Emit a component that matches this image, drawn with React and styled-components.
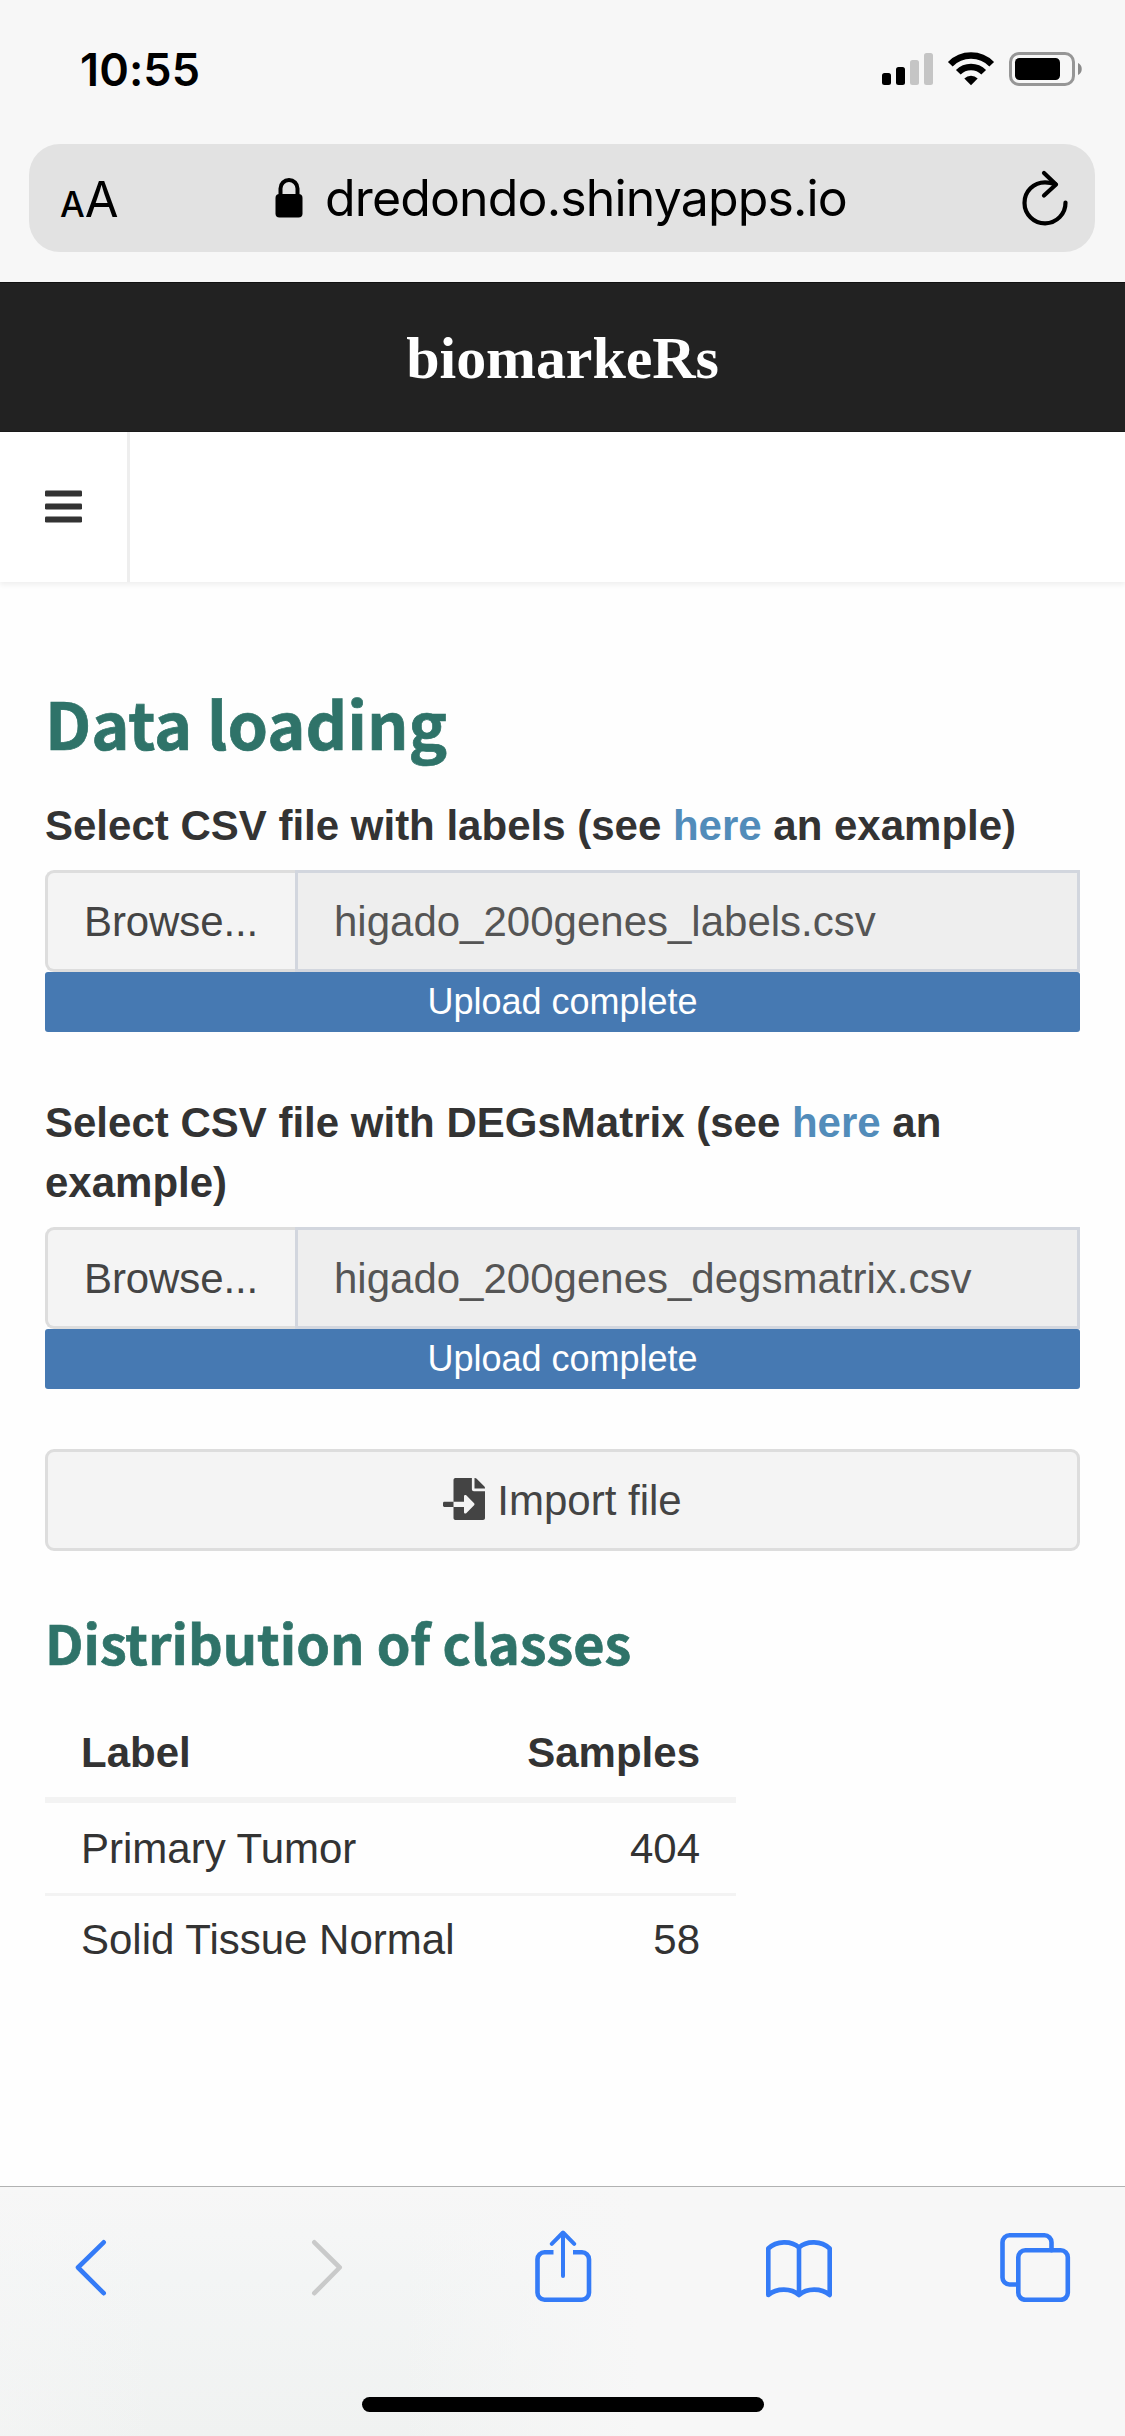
import React from "react";
import styled, { createGlobalStyle } from "styled-components";
import { FaFileImport } from "react-icons/fa";

const GlobalStyle = createGlobalStyle`
  * { box-sizing: border-box; }
  body { margin: 0; background: #fefefe; }
`;

const systemFont = `Inter, Roboto, sans-serif`;
const pageFont = `"Liberation Sans", Arial, sans-serif`;
const headingFont = `"Noto Sans CJK SC", "Noto Sans", sans-serif`;

const Screen = styled.div`
  display: flex;
  flex-direction: column;
  width: 1125px;
  height: 2436px;
  overflow: hidden;
  background: #fefefe;
  font-family: ${pageFont};
  font-size: 42px;
  line-height: 60px;
  color: #333;
`;

const BrowserTop = styled.header`
  height: 282px;
  flex: none;
  background: #f7f7f7;
  color: #000;
  font-family: ${systemFont};
`;

const StatusBar = styled.div`
  height: 144px;
  padding: 49px 43px 0 80px;
  display: flex;
  justify-content: space-between;
  align-items: flex-start;
`;

const Clock = styled.div`
  padding-top: 1px;
  font-size: 45px;
  font-weight: 600;
  line-height: 40px;
  letter-spacing: 0.1px;
`;

const StatusIcons = styled.svg`
  display: block;
  width: 201px;
  height: 36px;
  margin-top: 2px;
`;

const AddressBar = styled.div`
  height: 108px;
  margin: 0 30px 0 29px;
  padding: 0 27px 0 31px;
  border-radius: 31px;
  background: #e2e2e2;
  display: flex;
  align-items: center;
  justify-content: space-between;
`;

const TextSize = styled.div`
  width: 60px;
  padding-top: 7px;
  display: flex;
  align-items: baseline;
  gap: 1px;
  line-height: 50px;
`;

const Letter = styled.span`
  font-size: ${(p) => p.$size}px;
  font-weight: ${(p) => p.$weight};
  letter-spacing: -1px;
`;

const Address = styled.div`
  display: flex;
  align-items: center;
  gap: 22px;
  margin-right: 20px;
  font-size: 50px;
  line-height: 60px;
  letter-spacing: -0.85px;
  white-space: nowrap;
`;

const Icon = styled.svg`
  display: block;
  flex: none;
  width: ${(p) => p.$w}px;
  height: ${(p) => p.$h}px;
`;

const TitleBar = styled.div`
  flex: none;
  height: 150px;
  padding-top: 2px;
  background: #222;
  border-top: 1px solid #111;
  border-bottom: 1px solid #1b1b1b;
  display: flex;
  align-items: center;
  justify-content: center;
  color: #fff;
  font-family: "Liberation Serif", "Times New Roman", serif;
  font-weight: 700;
  font-size: 60px;
  letter-spacing: -0.1px;
`;

const NavBar = styled.nav`
  flex: none;
  height: 150px;
  display: flex;
  background: #fff;
  box-shadow: 0 3px 5px rgba(0, 0, 0, 0.06);
`;

const MenuButton = styled.button`
  width: 130px;
  padding: 0 0 0 45px;
  border: 0;
  border-right: 3px solid #eee;
  background: transparent;
  display: flex;
  align-items: center;
`;

const Content = styled.main`
  flex: 1;
  padding-left: 45px;
  padding-right: 45px;
`;

const Heading = styled.h2`
  margin: 0;
  font-family: ${headingFont};
  font-weight: 700;
  color: #2f7369;
  -webkit-text-stroke: 0.7px #2f7369;
`;

const PageHeading = styled(Heading)`
  padding: 92px 0 25px;
  font-size: 64.8px;
  line-height: 96px;
`;

const SectionHeading = styled(Heading)`
  padding: 25px 0 0;
  font-size: 53.95px;
  line-height: 131px;
`;

const Field = styled.section`
  margin-bottom: 60px;
`;

const Label = styled.label`
  display: block;
  padding-top: 1px;
  margin-bottom: 14px;
  font-weight: 700;
`;

const Link = styled.a`
  color: #528cba;
`;

const FileInput = styled.div`
  display: flex;
  height: 102px;
  line-height: 98px;
`;

const Browse = styled.span`
  width: 250px;
  padding-left: 36px;
  border: 3px solid #ddd;
  border-right: 0;
  border-radius: 9px 0 0 9px;
  background: #f4f4f4;
  color: #444;
  letter-spacing: -0.1px;
`;

const FileName = styled.span`
  flex: 1;
  padding-left: 36px;
  border: 3px solid #d2d6de;
  background: #eee;
  color: #555;
`;

const Progress = styled.div`
  height: 60px;
  border-radius: 3px;
  background: #4679b2;
  color: #fff;
  font-size: 36px;
  text-align: center;
`;

const ImportButton = styled.button`
  width: 100%;
  height: 102px;
  padding: 2px 0 0;
  border: 3px solid #ddd;
  border-radius: 9px;
  background: #f4f4f4;
  color: #444;
  font: inherit;
  display: flex;
  align-items: center;
  justify-content: center;
  gap: 12px;
`;

const ImportIcon = styled(FaFileImport)`
  width: 42px;
  height: 42px;
  margin-bottom: 4px;
`;

const Table = styled.table`
  width: 691px;
  border-spacing: 0;
`;

const Cell = styled.td`
  padding: ${(p) => (p.$last ? "14px 36px" : "16px 36px 14px")};
  text-align: ${(p) => (p.$right ? "right" : "left")};
  border-bottom: ${(p) => (p.$last ? 0 : "3px solid #f3f3f3")};
`;

const HeadCell = styled(Cell)`
  font-weight: 700;
  border-bottom: 6px solid #f3f3f3;
`;

const BrowserBottom = styled.footer`
  flex: none;
  height: 250px;
  border-top: 1px solid #b1b2b2;
  background:
    linear-gradient(90deg, rgba(247, 247, 247, 0.4) 0, rgba(247, 247, 247, 0) 160px, rgba(247, 247, 247, 0) 400px, #f7f7f7 640px),
    linear-gradient(180deg, #f7f7f7 0, #f3f5f5 90px, #f0f2f1 100%);
  display: flex;
  flex-direction: column;
  align-items: center;
`;

const Toolbar = styled.div`
  width: 100%;
  height: 210px;
  padding: 43px 54px 0 55px;
  display: flex;
  justify-content: space-between;
`;

const HomeIndicator = styled.div`
  width: 402px;
  height: 15px;
  border-radius: 8px;
  background: #000;
`;

const blue = "#347bf7";

const ToolIcon = ({ color = blue, children }) => (
  <Icon $w={72} $h={72} viewBox="0 0 72 72" fill="none" stroke={color} strokeWidth="4.6" strokeLinecap="round" strokeLinejoin="round">
    {children}
  </Icon>
);

const FileField = ({ subject, file }) => (
  <Field>
    <Label>
      Select CSV file with {subject} (see <Link>here</Link> an example)
    </Label>
    <FileInput>
      <Browse>Browse...</Browse>
      <FileName>{file}</FileName>
    </FileInput>
    <Progress>Upload complete</Progress>
  </Field>
);

const rows = [
  ["Primary Tumor", 404],
  ["Solid Tissue Normal", 58],
];

export default function App() {
  return (
    <Screen>
      <GlobalStyle />
      <BrowserTop>
        <StatusBar>
          <Clock>10:55</Clock>
          <StatusIcons viewBox="0 0 201 36">
            <rect x="1" y="22" width="9" height="12" rx="2.5" />
            <rect x="15" y="16" width="9" height="18" rx="2.5" />
            <rect x="29" y="9" width="9" height="25" rx="2.5" fill="#c5c5c5" />
            <rect x="43" y="2" width="9" height="32" rx="2.5" fill="#c5c5c5" />
            <g fill="none" stroke="#000" strokeWidth="6.6">
              <path d="M69.3 13.2a29 29 0 0 1 41.4 0" />
              <path d="M77.3 21.3a17.8 17.8 0 0 1 25.4 0" />
            </g>
            <path d="M90 34.3l-6.7-6.8a9.6 9.6 0 0 1 13.4 0z" />
            <rect x="129.5" y="2.5" width="63" height="31" rx="8.5" fill="none" stroke="#969696" strokeWidth="3" />
            <rect x="134" y="7" width="45" height="22" rx="4.5" />
            <path d="M197 12c5 1.800 5 10.200 0 12z" fill="#8b8b8b" />
          </StatusIcons>
        </StatusBar>
        <AddressBar>
          <TextSize>
            <Letter $size={35} $weight={500}>A</Letter>
            <Letter $size={49} $weight={400}>A</Letter>
          </TextSize>
          <Address>
            <Icon $w={28} $h={40} viewBox="0 0 28 40">
              <rect x="0.500" y="16" width="27" height="23.500" rx="4" />
              <path d="M5.500 18v-7.500a8.500 8.500 0 0 1 17 0V18" fill="none" stroke="#000" strokeWidth="4" />
            </Icon>
            <span>dredondo.shinyapps.io</span>
          </Address>
          <Icon $w={46} $h={56} viewBox="0 0 46 56" fill="none" stroke="#000" strokeWidth="4.2" strokeLinecap="round" strokeLinejoin="round">
            <path d="M43.500 32.500A20.500 20.500 0 1 1 23 12.300Q28.500 12.300 33.500 14.300" />
            <path d="M22 3l12 11.500L22 25.500" />
          </Icon>
        </AddressBar>
      </BrowserTop>

      <TitleBar>biomarkeRs</TitleBar>
      <NavBar>
        <MenuButton>
          <Icon $w={37} $h={34} viewBox="0 0 37 34" fill="#333">
            <rect y="0.600" width="37" height="6" rx="1.300" />
            <rect y="13.600" width="37" height="6" rx="1.300" />
            <rect y="26.600" width="37" height="6" rx="1.300" />
          </Icon>
        </MenuButton>
      </NavBar>

      <Content>
        <PageHeading as="h1">Data loading</PageHeading>
        <FileField subject="labels" file="higado_200genes_labels.csv" />
        <FileField subject="DEGsMatrix" file="higado_200genes_degsmatrix.csv" />
        <ImportButton>
          <ImportIcon />
          <span>Import file</span>
        </ImportButton>
        <SectionHeading>Distribution of classes</SectionHeading>
        <Table>
          <thead>
            <tr>
              <HeadCell as="th">Label</HeadCell>
              <HeadCell as="th" $right>Samples</HeadCell>
            </tr>
          </thead>
          <tbody>
            {rows.map(([name, count], i) => (
              <tr key={name}>
                <Cell $last={i === rows.length - 1}>{name}</Cell>
                <Cell $right $last={i === rows.length - 1}>{count}</Cell>
              </tr>
            ))}
          </tbody>
        </Table>
      </Content>

      <BrowserBottom>
        <Toolbar>
          <ToolIcon>
            <path d="M48.700 12.300L23 37.500l25.700 25.700" />
          </ToolIcon>
          <ToolIcon color="#c9caca">
            <path d="M23.300 12.300L48.700 37.500 23.300 63.200" />
          </ToolIcon>
          <ToolIcon>
            <path strokeLinecap="butt" d="M26.500 22.300h-9a7 7 0 0 0-7 7v33.400a7 7 0 0 0 7 7h37.500a7 7 0 0 0 7-7V29.300a7 7 0 0 0-7-7h-9" />
            <path strokeWidth="4" d="M36 46V2.800M24.800 13.800L36 2.500l11.200 11.300" />
          </ToolIcon>
          <ToolIcon>
            <path d="M36 17.500C28.500 10.500 13.500 10.500 5.300 18.500V65c8.200-7.200 23.200-7.200 30.700 0 7.500-7.200 22.500-7.200 30.700 0V18.500C58.500 10.500 43.500 10.500 36 17.500zV65" />
          </ToolIcon>
          <ToolIcon>
            <path d="M18.500 54.500H10.500a7 7 0 0 1-7-7V12.300a7 7 0 0 1 7-7h35a7 7 0 0 1 7 7v8" />
            <rect x="19.300" y="20.300" width="49.500" height="49.500" rx="7" />
          </ToolIcon>
        </Toolbar>
        <HomeIndicator />
      </BrowserBottom>
    </Screen>
  );
}
